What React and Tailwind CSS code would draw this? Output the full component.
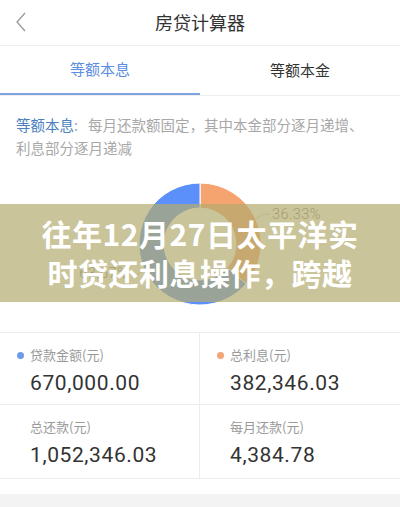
import React from "react";

const cjk = { fontFamily: '"Noto Sans CJK SC", "Noto Sans", sans-serif' };
const num = { fontFamily: 'Roboto, "Noto Sans CJK SC", sans-serif' };

function polar(cx, cy, r, deg) {
  const a = (deg * Math.PI) / 180;
  return [cx + r * Math.cos(a), cy + r * Math.sin(a)];
}

function arc(cx, cy, ro, ri, a0, a1) {
  const [x0, y0] = polar(cx, cy, ro, a0);
  const [x1, y1] = polar(cx, cy, ro, a1);
  const [x2, y2] = polar(cx, cy, ri, a1);
  const [x3, y3] = polar(cx, cy, ri, a0);
  const big = a1 - a0 > 180 ? 1 : 0;
  return `M${x0} ${y0} A${ro} ${ro} 0 ${big} 1 ${x1} ${y1} L${x2} ${y2} A${ri} ${ri} 0 ${big} 0 ${x3} ${y3} Z`;
}

function Donut() {
  const cx = 200, cy = 84, ro = 61, ri = 36;
  const split = -90 + 360 * 0.3633;
  return (
    <svg width="400" height="172" viewBox="0 0 400 172" className="block">
      <path d={arc(cx, cy, ro, ri, -90, split)} fill="#f6a46f" stroke="#fff" strokeWidth="1" />
      <path d={arc(cx, cy, ro, ri, split, 270)} fill="#5b8ff9" stroke="#fff" strokeWidth="1" />
      <polyline points="256,59 263,54 270,54" fill="none" stroke="#bbb" strokeWidth="0.8" />
      <text x="272" y="59" fontSize="14.5" fill="#777" letterSpacing="0.4" style={num} fontWeight="300">36.33%</text>
      <polyline points="144,110 137,115 130,115" fill="none" stroke="#bbb" strokeWidth="0.8" />
      <text x="128" y="118" fontSize="14.5" fill="#777" letterSpacing="0.4" textAnchor="end" style={num} fontWeight="300">63.67%</text>
    </svg>
  );
}

function Stat({ dot, label, value, right, h }) {
  return (
    <div className={`${h} pl-[30px] pt-[13px] relative ${right ? "" : "border-r border-[#ececec]"}`}>
      {dot && <span className={`absolute left-[17px] top-[19px] w-[7px] h-[7px] rounded-full ${dot}`} />}
      <div className="text-[13px] leading-[18px] text-[#9a9a9a]" style={cjk}>{label}</div>
      <div className="text-[21px] leading-[28px] mt-[5px] text-[#333] tracking-[0.6px]" style={num}>{value}</div>
    </div>
  );
}

export default function App() {
  return (
    <div className="w-[400px] h-[507px] bg-white relative overflow-hidden" style={cjk}>
      {/* header */}
      <div className="h-[46px] flex items-center justify-center relative border-b border-[#eeeeee]">
        <svg className="absolute left-[14px] top-[12px]" width="14" height="20" viewBox="0 0 14 20">
          <polyline points="11,1 3,10 11,19" fill="none" stroke="#999" strokeWidth="1.3" />
        </svg>
        <span className="text-[18px] text-[#333]">房贷计算器</span>
      </div>

      {/* tabs */}
      <div className="h-[50px] flex border-b border-[#eeeeee]">
        <div className="flex-1 flex items-center justify-center text-[15px] text-[#5b8de0] border-b-2 border-[#7fa3e0]">
          等额本息
        </div>
        <div className="flex-1 flex items-center justify-center text-[15px] text-[#333]">等额本金</div>
      </div>

      {/* description */}
      <div className="px-[16px] pt-[17px] text-[14.5px] leading-[23px] text-[#a8a8a8] h-[64px] whitespace-nowrap">
        <span className="text-[#4b7fc0]">等额本息</span>
        <span className="mr-[10px]">:</span>每月还款额固定，其中本金部分逐月递增、
        <br />
        利息部分逐月递减
      </div>

      {/* chart */}
      <Donut />

      {/* stats */}
      <div className="grid grid-cols-2 border-t border-b border-[#ececec]">
        <div className="border-b border-[#ececec]">
          <Stat h="h-[71px]" dot="bg-[#6d9ceb]" label="贷款金额(元)" value="670,000.00" />
        </div>
        <div className="border-b border-[#ececec]">
          <Stat h="h-[71px]" dot="bg-[#f2a474]" label="总利息(元)" value="382,346.03" right />
        </div>
        <Stat h="h-[73px]" label="总还款(元)" value="1,052,346.03" />
        <Stat h="h-[73px]" label="每月还款(元)" value="4,384.78" right />
      </div>

      <div className="h-[15px]" />
      <div className="h-[20px] bg-[#f3f3f3]" />

      {/* overlay banner */}
      <div className="absolute left-0 right-0 top-[204px] h-[98px] bg-[#b3ab6f]/70 flex flex-col items-center justify-center">
        <div className="text-white font-bold text-[30px] leading-[39px] tracking-[0.5px]" style={cjk}>
          往年12月27日太平洋实
        </div>
        <div className="text-white font-bold text-[30px] leading-[39px] tracking-[0.5px]" style={cjk}>
          时贷还利息操作，跨越
        </div>
      </div>
    </div>
  );
}
